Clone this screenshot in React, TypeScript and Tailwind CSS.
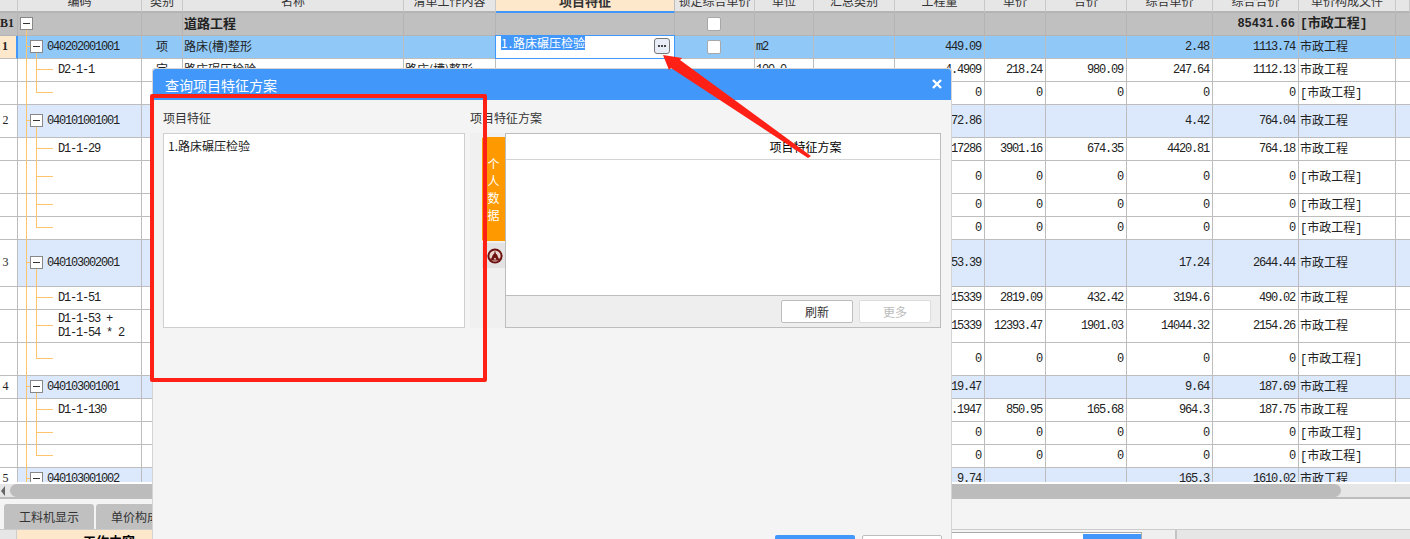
const gridCols =
  'grid grid-cols-[18px_124px_41px_221px_92px_179px_80px_59px_81px_90px_61px_81px_86px_86px_97px_14px]'
const cjk = "font-['Noto_Sans_CJK_SC',sans-serif] text-[12px]"
const mono = "font-['Liberation_Mono','Noto_Sans_CJK_SC',monospace] text-[12px] tracking-[-1.2px]"
const fileFont = "font-['Liberation_Mono','Noto_Sans_CJK_SC',monospace] text-[12px]"
const edge = 'border-r border-b border-[#bdbdbd]'
const line = `${edge} pb-[2px]`
const groupEdge = 'border-r border-b border-[#b4b4b4]'
const groupLine = `${groupEdge} pb-[2px]`

const headers = [
  '', '编码', '类别', '名称', '清单工作内容', '项目特征', '锁定综合单价', '单位',
  '汇总类别', '工程量', '单价', '合价', '综合单价', '综合合价', '单价构成文件', '',
]

type Kind = 'main' | 'selected' | 'child'

interface Row {
  kind: Kind
  h: string
  no?: string
  code?: string[]
  type?: string
  name?: string
  content?: string
  unit?: string
  nums: string[]
  file: string
  last?: boolean
}

const zeros = ['0', '0', '0', '0', '0']
const blank = (h: string, last = false): Row => ({ kind: 'child', h, nums: zeros, file: '[市政工程]', last })

const rows: Row[] = [
  { kind: 'selected', h: 'h-[23px]', no: '1', code: ['040202001001'], type: '项', name: '路床(槽)整形', unit: 'm2', nums: ['449.09', '', '', '2.48', '1113.74'], file: '市政工程' },
  { kind: 'child', h: 'h-[23px]', code: ['D2-1-1'], type: '定', name: '路床碾压检验', content: '路床(槽)整形', unit: '100.0', nums: ['4.4909', '218.24', '980.09', '247.64', '1112.13'], file: '市政工程' },
  blank('h-[23px]', true),
  { kind: 'main', h: 'h-[33px]', no: '2', code: ['040101001001'], nums: ['172.86', '', '', '4.42', '764.04'], file: '市政工程' },
  { kind: 'child', h: 'h-[23px]', code: ['D1-1-29'], nums: ['.17286', '3901.16', '674.35', '4420.81', '764.18'], file: '市政工程' },
  blank('h-[33px]'),
  blank('h-[23px]'),
  blank('h-[23px]', true),
  { kind: 'main', h: 'h-[47px]', no: '3', code: ['040103002001'], nums: ['153.39', '', '', '17.24', '2644.44'], file: '市政工程' },
  { kind: 'child', h: 'h-[23px]', code: ['D1-1-51'], nums: ['.15339', '2819.09', '432.42', '3194.6', '490.02'], file: '市政工程' },
  { kind: 'child', h: 'h-[33px]', code: ['D1-1-53 +', 'D1-1-54 * 2'], nums: ['.15339', '12393.47', '1901.03', '14044.32', '2154.26'], file: '市政工程' },
  blank('h-[33px]', true),
  { kind: 'main', h: 'h-[23px]', no: '4', code: ['040103001001'], nums: ['19.47', '', '', '9.64', '187.69'], file: '市政工程' },
  { kind: 'child', h: 'h-[23px]', code: ['D1-1-130'], nums: ['.1947', '850.95', '165.68', '964.3', '187.75'], file: '市政工程' },
  blank('h-[23px]'),
  blank('h-[23px]', true),
  { kind: 'main', h: 'h-[23px]', no: '5', code: ['040103001002'], nums: ['9.74', '', '', '165.3', '1610.02'], file: '市政工程' },
]

function MinusBox() {
  return (
    <span className="relative z-10 flex h-[13px] w-[13px] shrink-0 items-center justify-center border border-[#888888] bg-white">
      <span className="h-px w-[7px] bg-[#333333]" />
    </span>
  )
}

function Checkbox() {
  return <span className="h-[14px] w-[14px] rounded-[2px] border border-[#a8a8a8] bg-white" />
}

function CodeCell({ row }: { row: Row }) {
  const isChild = row.kind === 'child'
  return (
    <div className={`relative flex items-center ${line} ${isChild ? 'pl-[40px]' : 'pl-[12px]'}`}>
      {/* 树形连接线 */}
      <span className="absolute -top-px bottom-[-1px] left-[8px] w-px bg-[#ffc56e]" />
      {isChild ? (
        <>
          <span className={`absolute -top-px left-[18px] w-px bg-[#ffc56e] ${row.last ? 'h-[50%]' : 'bottom-[-1px]'}`} />
          <span className="absolute top-[calc(50%-1px)] left-[18px] h-px w-[17px] bg-[#ffc56e]" />
        </>
      ) : (
        <>
          <span className="absolute top-[calc(50%-1px)] left-[8px] h-px w-[5px] bg-[#ffc56e]" />
          <span className="absolute top-[calc(50%-1px)] bottom-[-1px] left-[18px] w-px bg-[#ffc56e]" />
        </>
      )}
      {!isChild && <MinusBox />}
      <div className={`${mono} relative top-px leading-[14px] whitespace-pre text-[#222222] ${isChild ? '' : 'ml-[4px]'}`}>
        {row.code?.map((c) => <div key={c}>{c}</div>)}
      </div>
    </div>
  )
}

function DataRow({ row }: { row: Row }) {
  const bg = row.kind === 'selected' ? 'bg-[#90c8f8]' : row.kind === 'main' ? 'bg-[#dce9fc]' : 'bg-white'
  const selected = row.kind === 'selected'
  return (
    <div className={`${gridCols} ${row.h} ${bg} text-[#222222]`}>
      <div className={`flex items-center justify-center pr-[6px] ${line} font-['Liberation_Serif',serif] text-[12px] ${selected ? 'border-r-[2px] border-r-[#4297fb] bg-[#fde8cc] font-bold' : 'bg-white'}`}>
        {row.no}
      </div>
      <CodeCell row={row} />
      <div className={`flex items-center justify-center ${line} ${cjk}`}>{row.type}</div>
      <div className={`flex items-center pl-[1px] ${line} ${cjk}`}>{row.name}</div>
      <div className={`flex items-center pl-[1px] ${line} ${cjk}`}>{row.content}</div>
      {selected ? (
        <div className="relative -mt-px -ml-px border border-[#4297fb] bg-white pl-[5px]">
          <span className={`${cjk} block w-fit bg-[#4297fb] leading-[14px] text-white`}>
            <span className="tracking-[1px]">1.</span>路床碾压检验
          </span>
          <span className="absolute top-[2px] right-[4px] flex h-[16px] w-[16px] items-center justify-center gap-px rounded-[3px] border border-[#777777] bg-[#e9edf8]">
            <span className="h-[2px] w-[2px] bg-[#444444]" />
            <span className="h-[2px] w-[2px] bg-[#444444]" />
            <span className="h-[2px] w-[2px] bg-[#444444]" />
          </span>
        </div>
      ) : (
        <div className={line} />
      )}
      <div className={`flex items-center justify-center pr-[2px] ${edge}`}>{selected && <Checkbox />}</div>
      <div className={`flex items-center pl-[1px] ${edge} ${mono}`}>{row.unit}</div>
      <div className={line} />
      {row.nums.map((n, i) => (
        <div key={i} className={`flex items-center justify-end pr-[3px] ${edge} ${mono}`}>{n}</div>
      ))}
      <div className={`flex items-center pt-[2px] pl-[1px] ${edge} ${fileFont}`}>{row.file}</div>
      <div className="border-b border-[#bdbdbd]" />
    </div>
  )
}

function GridTable() {
  return (
    <div className="h-[482px] shrink-0 overflow-hidden">
      {/* 表头 */}
      <div className={`${gridCols} -mt-[9px] h-[22px] bg-[#e6e6e6] ${cjk} text-[#333333]`}>
        {headers.map((h, i) => (
          <div
            key={i}
            className={
              i === 5
                ? 'flex items-center justify-center border-r border-b-[2px] border-r-[#bdbdbd] border-b-[#4297fb] bg-[#fde8cc] text-[13px] font-bold'
                : 'flex items-center justify-center border-r border-b-[2px] border-r-[#c8c8c8] border-b-[#b4b4b4]'
            }
          >
            {h}
          </div>
        ))}
      </div>
      {/* 分部行 */}
      <div className={`${gridCols} h-[23px] bg-[#c0c0c0] text-[#222222]`}>
        <div className={`flex items-center ${groupLine} font-['Liberation_Serif',serif] text-[12px] font-bold`}>B1</div>
        <div className={`relative flex items-center ${groupLine} pl-[2px]`}>
          <MinusBox />
          <span className="absolute top-1/2 bottom-[-1px] left-[8px] w-px bg-[#ffc56e]" />
        </div>
        <div className={groupLine} />
        <div className={`flex items-center pl-[1px] ${groupLine} font-['Noto_Sans_CJK_SC',sans-serif] text-[13px] font-bold`}>道路工程</div>
        <div className={groupLine} />
        <div className={groupLine} />
        <div className={`flex items-center justify-center pr-[2px] ${groupEdge}`}><Checkbox /></div>
        {[0, 1, 2, 3, 4, 5].map((i) => (
          <div key={i} className={groupLine} />
        ))}
        <div className={`flex items-center justify-end pr-[3px] ${groupEdge} font-['Liberation_Mono',monospace] text-[12px] font-bold`}>85431.66</div>
        <div className={`flex items-center pl-[1px] ${groupEdge} font-['Liberation_Mono','Noto_Sans_CJK_SC',monospace] text-[13px] font-bold`}>[市政工程]</div>
        <div className="border-b border-[#b4b4b4]" />
      </div>
      {rows.map((row, i) => (
        <DataRow key={i} row={row} />
      ))}
    </div>
  )
}

function ScrollBar() {
  return (
    <div className="mt-[2px] flex h-[15px] shrink-0 items-center border-b-[2px] border-[#bdbdbd] bg-[#e6e6e6]">
      <span className="ml-px h-0 w-0 border-y-[5px] border-r-[4px] border-y-transparent border-r-[#666666]" />
      <span className="ml-[5px] h-[13px] w-[1331px] rounded-full bg-[#bcbcbc]" />
    </div>
  )
}

function BottomPanel() {
  return (
    <div className="flex min-h-0 flex-1 flex-col bg-[#f4f4f4]">
      <div className="flex h-[31px] shrink-0 items-end gap-[2px] border-b border-[#cccccc] pl-[4px]">
        <div className={`flex h-[25px] w-[90px] items-center justify-center rounded-t-[3px] bg-[#c0c0c0] ${cjk} text-[#333333]`}>工料机显示</div>
        <div className={`flex h-[25px] w-[78px] items-center rounded-t-[3px] bg-[#c0c0c0] pl-[15px] ${cjk} text-[#333333]`}>单价构成</div>
      </div>
      <div className="flex flex-1">
        <div className="w-[17px] border-r border-[#cccccc] bg-[#e6e6e6]" />
        <div className="w-[200px] bg-[#fde8cc] pt-[1px] pl-[66px] font-['Noto_Sans_CJK_SC',sans-serif] text-[13px] font-bold">工作内容</div>
        <div className="w-[734px]" />
        <div className="mt-[2px] flex w-[191px] border border-[#aaaaaa] bg-white">
          <span className="flex-1" />
          <span className="mt-px w-[58px] bg-[#4297fb]" />
        </div>
        <div className="w-[33px] bg-[#efefef]" />
        <div className="flex-1 border-l-[2px] border-[#c4c4c4] bg-[#e6e6e6]" />
      </div>
    </div>
  )
}

function Dialog() {
  return (
    <div className="absolute top-[68px] left-[152px] flex h-[491px] w-[800px] flex-col rounded-t-[3px] border-x border-t border-[#d4d4d4] bg-[#f4f4f4]">
      <div className="flex h-[31px] shrink-0 items-end justify-between rounded-t-[3px] bg-[#4297fb] pr-[8px] pb-[6px] pl-[12px] text-white">
        <span className="font-['Noto_Sans_CJK_SC',sans-serif] text-[14px] leading-[18px]">查询项目特征方案</span>
        <svg width="10" height="10" viewBox="0 0 10 10" className="mr-px mb-[5px]">
          <path d="M1 1 L9 9 M9 1 L1 9" stroke="white" strokeWidth="2.4" />
        </svg>
      </div>
      <div className="flex pt-[10px] pl-[10px]">
        {/* 左侧 */}
        <div className="w-[302px] shrink-0">
          <div className={`${cjk} h-[23px] leading-[16px] text-[#333333]`}>项目特征</div>
          <div className={`h-[195px] border border-[#cfcfcf] bg-white px-[4px] py-[4px] ${cjk} leading-[16px] text-[#222222]`}>1.路床碾压检验</div>
        </div>
        {/* 右侧 */}
        <div className="ml-[5px] flex-1">
          <div className={`${cjk} h-[23px] leading-[16px] text-[#333333]`}>项目特征方案</div>
          <div className="flex h-[195px]">
            <div className="w-[35px] shrink-0 bg-[#f0f0f0] pt-[4px] pl-[12px]">
              <div className={`flex h-[104px] flex-col items-center justify-center rounded-l-[2px] bg-[#ff9900] ${cjk} leading-[17px] text-white`}>
                <span>个</span>
                <span>人</span>
                <span>数</span>
                <span>据</span>
              </div>
              <div className="mt-[2px] flex h-[25px] items-center justify-center bg-[#e3e3e3] pl-[3px]">
                <svg width="16" height="16" viewBox="0 0 16 16">
                  <circle cx="8" cy="8" r="7.6" fill="#6e1210" />
                  <circle cx="8" cy="8" r="5.6" fill="#e8d4cc" />
                  <path d="M8 2.6 L9 6 L10 6.6 L11.6 10.4 H13 L12 12.4 H4 L3 10.4 H4.4 L6 6.6 L7 6 Z" fill="#6e1210" />
                  <path d="M6.6 11.6 Q8 8 9.4 11.6 Z" fill="#e8d4cc" />
                </svg>
              </div>
            </div>
            <div className="flex w-[436px] flex-col border border-[#bdbdbd] bg-white">
              <div className={`flex h-[26px] shrink-0 items-center justify-center border-b border-[#d4d4d4] pl-[165px] ${cjk} text-black`}>项目特征方案</div>
              <div className="flex-1" />
              <div className="flex h-[32px] shrink-0 items-center justify-end gap-[6px] border-t border-[#bdbdbd] bg-[#eeeeee] pr-[9px]">
                <span className={`flex h-[23px] w-[72px] items-center justify-center rounded-[2px] border border-[#bdbdbd] bg-white ${cjk} text-[#333333]`}>刷新</span>
                <span className={`flex h-[23px] w-[72px] items-center justify-center rounded-[2px] border border-[#dddddd] bg-white ${cjk} text-[#bbbbbb]`}>更多</span>
              </div>
            </div>
          </div>
        </div>
      </div>
      {/* 底部按钮 */}
      <div className="absolute top-[466px] left-[622px] flex gap-[7px]">
        <span className="h-[24px] w-[80px] rounded-[2px] bg-[#4297fb]" />
        <span className="h-[24px] w-[80px] rounded-[2px] border border-[#bdbdbd] bg-white" />
      </div>
    </div>
  )
}

export default function App() {
  return (
    <div className="relative flex h-[539px] w-[1410px] flex-col overflow-hidden bg-white">
      <GridTable />
      <ScrollBar />
      <BottomPanel />
      <Dialog />
      {/* 标注：红框和箭头 */}
      <div className="absolute top-[94px] left-[150px] h-[288px] w-[337px] rounded-[2px] border-[4px] border-[#ff2016]" />
      <svg className="absolute top-0 left-0" width="1410" height="539" viewBox="0 0 1410 539" fill="none">
        <path d="M663 55 L682 58 L680 60 L811 156 L808 158 L671 68 L669 70 Z" fill="#ff2016" />
      </svg>
    </div>
  )
}
